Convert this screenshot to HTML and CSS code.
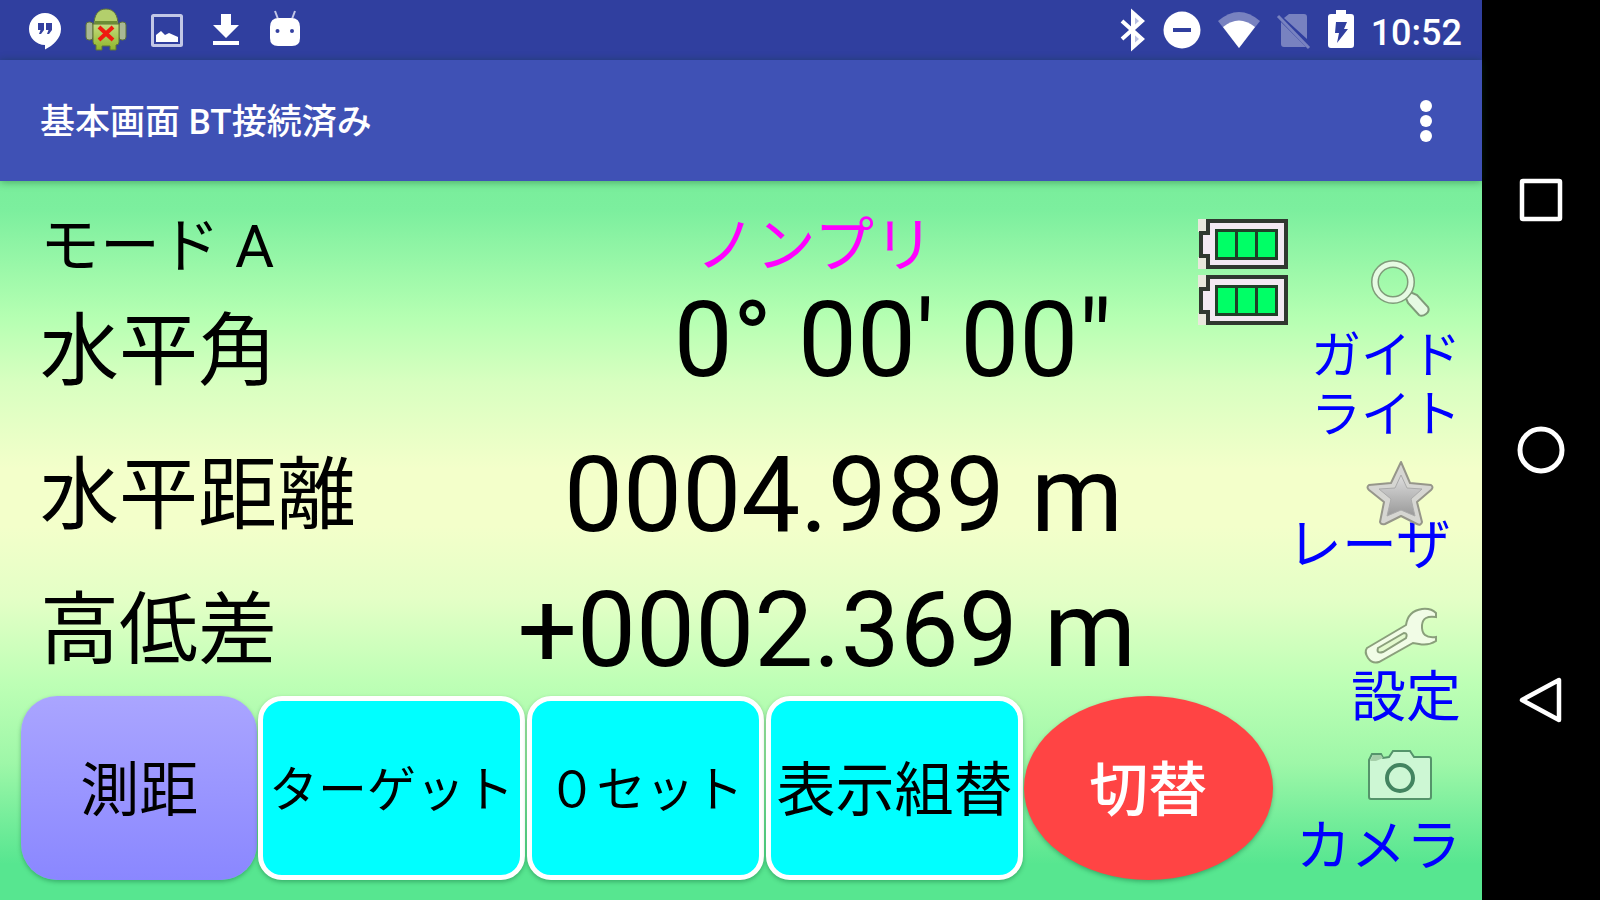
FILE: index.html
```html
<!DOCTYPE html>
<html lang="ja">
<head>
<meta charset="utf-8">
<title>基本画面</title>
<link rel="stylesheet" href="styles.css">
</head>
<body>
<div class="device">
  <div class="app">
    <div class="status">
      <div class="status-left">
        <svg width="40" height="40" viewBox="0 0 40 40"><path d="M20 3a16 16 0 1 0 0 32v4.500c8-4 16-11 16-20.500a16 16 0 0 0-16-16z" fill="#fff"/><path d="M13 13h6v7l-3 4h-2l1.500-4H13zM21 13h6v7l-3 4h-2l1.500-4H21z" fill="#3440a0"/></svg>
        <svg width="44" height="44" viewBox="0 0 44 44"><defs><linearGradient id="droid" x1="0" y1="0" x2="0" y2="1"><stop offset="0" stop-color="#c5dc7e"/><stop offset="1" stop-color="#8fb52a"/></linearGradient></defs><g stroke="#5f7338" stroke-width="1"><rect x="2" y="14" width="7" height="18" rx="3" fill="#a9b894"/><rect x="35" y="14" width="7" height="18" rx="3" fill="#a9b894"/><path d="M10 17C10 7 14 1 22 1s12 6 12 16z" fill="#b3cf6c"/><path d="M9 16h26v18q0 3-3 3v5h-6v-4h-8v4h-6v-5q-3 0-3-3z" fill="url(#droid)"/></g><path d="M11 13h22v3H11z" fill="#6b8c35"/><path d="M15 19l14 13M29 19L15 32" stroke="#f01a10" stroke-width="4"/></svg>
        <svg width="40" height="40" viewBox="0 0 40 40"><rect x="5.500" y="5.500" width="29" height="30" rx="1" fill="none" stroke="#c2c7e6" stroke-width="3"/><path d="M9 32v-7l5-4 4 4 4-2 9 4v5z" fill="#fff"/></svg>
        <svg width="40" height="40" viewBox="0 0 40 40"><path d="M15 4h10v11h8L20 28 7 15h8zM7 31h26v4H7z" fill="#fff"/></svg>
        <svg width="40" height="40" viewBox="0 0 40 40"><path d="M10 1l3 8M30 1l-3 8" stroke="#c2c7e6" stroke-width="2"/><path d="M5 17q0-9 9-9h12q9 0 9 9v11q0 8-8 8H13q-8 0-8-8z" fill="#fff"/><circle cx="12.500" cy="21" r="2" fill="#3440a0"/><circle cx="27" cy="21" r="2" fill="#3440a0"/></svg>
      </div>
      <div class="status-right">
        <svg width="26" height="40" viewBox="0 0 26 40"><path d="M13 3l9 8-9 9zM13 20l9 9-9 8z" fill="#b9bfe2"/><path d="M2 11l20 18-9 8V3l9 8L2 29" fill="none" stroke="#fff" stroke-width="4"/></svg>
        <svg width="38" height="40" viewBox="0 0 38 40"><circle cx="19" cy="20" r="18.500" fill="#fff"/><rect x="10" y="18" width="18" height="4" fill="#303f9f"/></svg>
        <svg width="42" height="40" viewBox="0 0 42 40"><path d="M0 11Q21-7 42 11L21 38z" fill="#7882c0"/><path d="M5 17q16-13 32 0L21 38z" fill="#fff"/></svg>
        <svg width="34" height="40" viewBox="0 0 34 40"><path d="M12 4h15q3 0 3 3v22L7 8zM4 12l25 25H7q-3 0-3-3z" fill="#7882c0"/><path d="M1 6l31 32" stroke="#7882c0" stroke-width="3"/></svg>
        <svg width="26" height="40" viewBox="0 0 26 40"><path d="M8 0h10v4h5q3 0 3 3v28q0 3-3 3H3q-3 0-3-3V7q0-3 3-3h5z" fill="#fff"/><path d="M8 12h11l-3 7h4L9 33l2-10H7z" fill="#303f9f"/></svg>
        <span class="clock">10:52</span>
      </div>
    </div>
    <header class="appbar">
      <h1 class="title">基本画面 BT接続済み</h1>
      <button class="menu" type="button" aria-label="メニュー"><svg width="16" height="46" viewBox="0 0 16 46"><g fill="#fff"><circle cx="8" cy="8" r="6"/><circle cx="8" cy="23" r="6"/><circle cx="8" cy="38" r="6"/></g></svg></button>
    </header>
    <main class="content">
      <div class="left">
        <div class="readouts">
          <div class="measure">
            <div class="row row-mode"><span class="mode">モード A</span><span class="target">ノンプリ</span></div>
            <div class="row row-angle"><span class="label">水平角</span><span class="value">0° 00' 00"</span></div>
            <div class="row row-dist"><span class="label">水平距離</span><span class="value">0004.989 m</span></div>
            <div class="row row-height"><span class="label">高低差</span><span class="value">+0002.369 m</span></div>
          </div>
          <div class="batteries">
            <svg width="90" height="50" viewBox="0 0 90 50"><path d="M0 0h8v13H0zM0 38h8v12H0z" fill="#e8e8dc"/><path d="M10 2h78v46H10V37H3V14h7z" fill="#f3e9f3" stroke="#303830" stroke-width="4"/><rect x="17" y="10" width="63" height="31" fill="#204028"/><path d="M20 13h17v25H20zM40 13h17v25H40zM60 13h17v25H60z" fill="#00ff66"/></svg>
            <svg width="90" height="50" viewBox="0 0 90 50"><path d="M0 0h8v13H0zM0 38h8v12H0z" fill="#e8e8dc"/><path d="M10 2h78v46H10V37H3V14h7z" fill="#f3e9f3" stroke="#303830" stroke-width="4"/><rect x="17" y="10" width="63" height="31" fill="#204028"/><path d="M20 13h17v25H20zM40 13h17v25H40zM60 13h17v25H60z" fill="#00ff66"/></svg>
          </div>
        </div>
        <div class="buttons">
          <button class="btn btn-measure" type="button">測距</button>
          <button class="btn btn-cyan btn-kana" type="button">ターゲット</button>
          <button class="btn btn-cyan btn-kana" type="button">０セット</button>
          <button class="btn btn-cyan" type="button">表示組替</button>
          <button class="btn btn-switch" type="button">切替</button>
        </div>
      </div>
      <aside class="side">
        <button class="tool tool-guide" type="button">
          <svg class="tool-icon" width="72" height="64" viewBox="0 0 72 64"><path d="M41 38l5-4 7 3 11 12q2 4-2 7t-7 1L44 45z" fill="#e6fae3" stroke="#7f9b79" stroke-width="2"/><circle cx="29" cy="24" r="18" fill="none" stroke="#7f9b79" stroke-width="8"/><circle cx="29" cy="24" r="18" fill="none" stroke="#e6fae3" stroke-width="5"/></svg>
          <span class="tool-text tool-small">ガイド<br>ライト</span>
        </button>
        <button class="tool tool-laser" type="button">
          <svg class="tool-icon" width="72" height="64" viewBox="0 0 72 64"><defs><linearGradient id="star" x1="0" y1="0" x2="0" y2="1"><stop offset="0" stop-color="#dedede"/><stop offset="1" stop-color="#999"/></linearGradient></defs><path d="M37 3l9 21 21 2q3 2 0 5L53 43l5 20q-1 4-5 2L37 57 21 65q-4 1-5-2l4-20L5 31q-3-3 0-5l22-2z" fill="#d6d6d2" stroke="#96968a" stroke-width="2" stroke-linejoin="round"/><path d="M37 16l6 13 15 1-11 10 4 17-14-6-14 6 4-17-12-10 16-1z" fill="url(#star)" stroke="#aaa" stroke-width="1"/></svg>
          <span class="tool-text">レーザ</span>
        </button>
        <button class="tool tool-settings" type="button">
          <svg class="tool-icon" width="72" height="56" viewBox="0 0 72 56"><path d="M3 40L42 17Q44 3 58 1q9-1 14 4v4q-13-2-14 8-1 14 14 12v4q-8 5-17 3l-6-1L15 54q-7 2-11-4t-1-10z" fill="#f1fce6" stroke="#8a9f7b" stroke-width="2"/><path d="M14 40l26-15q4 0 2 5L19 44q-7 2-5-4z" fill="#e2f9cd" stroke="#8a9f7b" stroke-width="2"/></svg>
          <span class="tool-text">設定</span>
        </button>
        <button class="tool tool-camera" type="button">
          <svg class="tool-icon" width="72" height="52" viewBox="0 0 72 52"><path d="M5 10l3-6h9l2 4 6-1 4-6h17l4 6h15q2 0 2 2v38q0 2-2 2H7q-2 0-2-2z" fill="#cdf7d4" stroke="#55946b" stroke-width="2"/><path d="M6 11l3-6h8l2 3-7 3z" fill="#a5cfa9"/><circle cx="36" cy="28" r="13" fill="#cdf7d4" stroke="#438460" stroke-width="4"/></svg>
          <span class="tool-text">カメラ</span>
        </button>
      </aside>
    </main>
  </div>
  <nav class="nav">
    <button class="nav-btn" type="button" aria-label="履歴"><svg width="48" height="48" viewBox="0 0 48 48"><rect x="5" y="5" width="38" height="38" rx="1" fill="none" stroke="#fff" stroke-width="4.500"/></svg></button>
    <button class="nav-btn" type="button" aria-label="ホーム"><svg width="48" height="48" viewBox="0 0 48 48"><circle cx="24" cy="24" r="21" fill="none" stroke="#fff" stroke-width="5"/></svg></button>
    <button class="nav-btn" type="button" aria-label="戻る"><svg width="48" height="48" viewBox="0 0 48 48"><path d="M42 4v40L5 24z" fill="none" stroke="#fff" stroke-width="4.500" stroke-linejoin="round"/></svg></button>
  </nav>
</div>
</body>
</html>
```
FILE: styles.css
```css
* { box-sizing: border-box; }
body { margin: 0; background: #000; font-family: Roboto, "Noto Sans CJK JP", sans-serif; color: #000; }
button { margin: 0; padding: 0; border: 0; background: none; font: inherit; color: inherit; }
svg { display: block; flex: none; overflow: visible; }
.device { display: flex; min-height: 100vh; }
.app { flex: 1; display: flex; flex-direction: column; min-width: 0; }

.status { display: flex; justify-content: space-between; align-items: center; height: 60px; padding: 0 20px 0 25px; background: #303f9f; color: #fff; }
.status-left { display: flex; align-items: center; gap: 19px; }
.status-right { display: flex; align-items: center; gap: 17px; }
.clock { font-size: 36px; line-height: 40px; font-weight: 500; padding-top: 5px; }

.appbar { display: flex; justify-content: space-between; align-items: center; height: 121px; padding: 0 48px 0 40px; background: #3f51b5; color: #fff; box-shadow: 0 1px 8px rgba(0, 60, 20, .4); position: relative; }
.title { margin: 0; padding-top: 5px; font-size: 35px; line-height: 48px; font-weight: 500; }

.content { flex: 1; display: flex; background: linear-gradient(#79ed9b 0%, #7cef9e 4%, #b5ffb2 19%, #d8ffc0 28%, #f3ffca 40%, #f3ffca 48%, #e4ffc6 58%, #bdffb5 70%, #9ef7a8 81%, #79ee9c 88%, #57e690 95%, #57e690 100%); }
.left { flex: 1; display: flex; flex-direction: column; justify-content: space-between; padding: 0 0 20px 20px; }
.readouts { display: flex; padding: 0 0 0 20px; }
.measure { flex: 1; }
.row { display: flex; justify-content: space-between; align-items: center; }
.row-mode { padding: 30px 214px 0 0; font-size: 60px; line-height: 72px; }
.target { color: #f0f; }
.row-angle { padding: 2px 36px 0 0; height: 136px; }
.row-angle .value { align-self: flex-start; }
.row-dist { padding: 0 25px 0 0; height: 154px; }
.row-height { padding: 0 12px 0 0; height: 116px; }
.label { font-size: 79px; line-height: 96px; }
.value { font-size: 105px; line-height: 112px; white-space: pre; }
.batteries { display: flex; flex-direction: column; gap: 6px; padding-top: 38px; width: 90px; margin-left: 50px; }

.buttons { display: grid; grid-template-columns: 236fr 268fr 239fr 258fr 249fr; height: 184px; padding: 0 15px 0 1px; }
.btn { padding-top: 6px; font-size: 59px; line-height: 72px; white-space: nowrap; box-shadow: 0 2px 4px rgba(0, 80, 40, .35); }
.btn-measure { border-radius: 36px; background: linear-gradient(#aaa5ff, #8a87ff); }
.btn-cyan { border: 5px solid #fff; border-radius: 24px; background: #0ff; margin: 0 1px; }
.btn-kana { font-size: 49px; }
.btn-switch { border-radius: 50%; background: #ff4444; color: #fff; font-weight: 500; }

.side { width: 194px; padding: 77px 21px 0 0; display: flex; flex-direction: column; color: #00f; }
.tool { display: flex; flex-direction: column; align-items: flex-end; text-align: right; }
.tool-icon { position: relative; margin-right: 25px; }
.tool-text { font-size: 55px; line-height: 56px; white-space: nowrap; }
.tool-small { font-size: 50px; line-height: 59px; }
.tool-guide { gap: 5px; }
.tool-laser { padding-top: 14px; }
.tool-laser .tool-text { margin: -6px 10px 0 0; }
.tool-settings { padding-top: 35px; gap: 5px; }
.tool-camera { padding-top: 25px; gap: 16px; }

.nav { width: 118px; flex: none; background: #000; display: flex; flex-direction: column; justify-content: space-around; align-items: center; padding: 75px 0; }
```
